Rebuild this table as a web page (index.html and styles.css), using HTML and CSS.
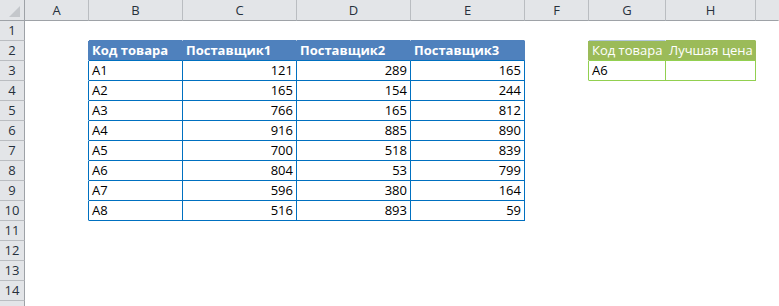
FILE: index.html
```html
<!DOCTYPE html>
<html lang="ru">
<head>
<meta charset="utf-8">
<title>Лист1</title>
<link rel="stylesheet" href="styles.css">
</head>
<body>
<div class="sheet">
  <div class="corner"><span class="tri"></span></div>
  <div class="hd">A</div><div class="hd">B</div><div class="hd">C</div><div class="hd">D</div><div class="hd">E</div><div class="hd">F</div><div class="hd">G</div><div class="hd">H</div><div class="hd last"></div>

  <div class="rh">1</div>
  <div class="c"></div><div class="c top-b"></div><div class="c top-b"></div><div class="c top-b"></div><div class="c top-b"></div><div class="c"></div><div class="c top-g1"></div><div class="c top-g"></div><div class="c"></div>

  <div class="rh">2</div>
  <div class="c left-bh"></div>
  <div class="c th">Код товара</div><div class="c th">Поставщик1</div><div class="c th">Поставщик2</div><div class="c th">Поставщик3</div>
  <div class="c left-gh"></div>
  <div class="c gh">Код товара</div><div class="c gh">Лучшая цена</div>
  <div class="c"></div>

  <div class="rh">3</div>
  <div class="c left-b"></div><div class="c td">A1</div><div class="c td n">121</div><div class="c td n">289</div><div class="c td n">165</div>
  <div class="c left-g"></div><div class="c gd">A6</div><div class="c gd"></div><div class="c"></div>

  <div class="rh">4</div>
  <div class="c left-b"></div><div class="c td">A2</div><div class="c td n">165</div><div class="c td n">154</div><div class="c td n">244</div>
  <div class="c"></div><div class="c"></div><div class="c"></div><div class="c"></div>

  <div class="rh">5</div>
  <div class="c left-b"></div><div class="c td">A3</div><div class="c td n">766</div><div class="c td n">165</div><div class="c td n">812</div>
  <div class="c"></div><div class="c"></div><div class="c"></div><div class="c"></div>

  <div class="rh">6</div>
  <div class="c left-b"></div><div class="c td">A4</div><div class="c td n">916</div><div class="c td n">885</div><div class="c td n">890</div>
  <div class="c"></div><div class="c"></div><div class="c"></div><div class="c"></div>

  <div class="rh">7</div>
  <div class="c left-b"></div><div class="c td">A5</div><div class="c td n">700</div><div class="c td n">518</div><div class="c td n">839</div>
  <div class="c"></div><div class="c"></div><div class="c"></div><div class="c"></div>

  <div class="rh">8</div>
  <div class="c left-b"></div><div class="c td">A6</div><div class="c td n">804</div><div class="c td n">53</div><div class="c td n">799</div>
  <div class="c"></div><div class="c"></div><div class="c"></div><div class="c"></div>

  <div class="rh">9</div>
  <div class="c left-b"></div><div class="c td">A7</div><div class="c td n">596</div><div class="c td n">380</div><div class="c td n">164</div>
  <div class="c"></div><div class="c"></div><div class="c"></div><div class="c"></div>

  <div class="rh">10</div>
  <div class="c left-b"></div><div class="c td">A8</div><div class="c td n">516</div><div class="c td n">893</div><div class="c td n">59</div>
  <div class="c"></div><div class="c"></div><div class="c"></div><div class="c"></div>

  <div class="rh">11</div>
  <div class="c"></div><div class="c"></div><div class="c"></div><div class="c"></div><div class="c"></div><div class="c"></div><div class="c"></div><div class="c"></div><div class="c"></div>
  <div class="rh">12</div>
  <div class="c"></div><div class="c"></div><div class="c"></div><div class="c"></div><div class="c"></div><div class="c"></div><div class="c"></div><div class="c"></div><div class="c"></div>
  <div class="rh">13</div>
  <div class="c"></div><div class="c"></div><div class="c"></div><div class="c"></div><div class="c"></div><div class="c"></div><div class="c"></div><div class="c"></div><div class="c"></div>
  <div class="rh">14</div>
  <div class="c"></div><div class="c"></div><div class="c"></div><div class="c"></div><div class="c"></div><div class="c"></div><div class="c"></div><div class="c"></div><div class="c"></div>
  <div class="rh"></div>
  <div class="c"></div><div class="c"></div><div class="c"></div><div class="c"></div><div class="c"></div><div class="c"></div><div class="c"></div><div class="c"></div><div class="c"></div>
</div>
</body>
</html>
```

FILE: styles.css
```css
html, body {
  margin: 0;
  padding: 0;
  background: #ffffff;
  overflow: hidden;
}

.sheet {
  display: grid;
  grid-template-columns: 25px 64px 94px 114px 114px 114px 64px 77px 90px 1fr;
  grid-template-rows: 21px repeat(15, 20px);
  font-family: "Open Sans", "Liberation Sans", sans-serif;
  font-size: 13px;
  color: #000000;
  width: 100%;
}

.sheet > div {
  box-sizing: border-box;
  border-right: 1px solid #ffffff;
  border-bottom: 1px solid #ffffff;
  display: flex;
  align-items: flex-end;
  padding: 0 3px 1px 3px;
  white-space: nowrap;
  overflow: visible;
  line-height: 17px;
}

.sheet > .corner {
  background: #e3e5e8;
  border-right: 1px solid #9ea2a7;
  border-bottom: 1px solid #9ea2a7;
  position: relative;
}

.tri {
  position: absolute;
  right: 4px;
  bottom: 3px;
  width: 0;
  height: 0;
  border-left: 11px solid transparent;
  border-bottom: 11px solid #c4c7cb;
}

.sheet > .hd {
  background: #e3e5e8;
  border-right: 1px solid #babdc1;
  border-bottom: 1px solid #9ea2a7;
  justify-content: center;
  align-items: center;
  color: #27313c;
  padding: 0;
}

.sheet > .hd.last {
  border-right-color: #e3e5e8;
}

.sheet > .rh {
  background: #e3e5e8;
  border-right: 1px solid #9ea2a7;
  border-bottom: 1px solid #babdc1;
  justify-content: center;
  align-items: center;
  color: #27313c;
  padding: 0;
}

.sheet > .top-b { border-bottom-color: #4f81bd; }
.sheet > .top-g1 { border-bottom-color: #b4c8dc; }
.sheet > .top-g { border-bottom-color: #9bbb59; }

.sheet > .left-bh { border-right-color: #4f81bd; }
.sheet > .left-b { border-right-color: #0070c0; }
.sheet > .left-gh { border-right-color: #9bbb59; }
.sheet > .left-g { border-right-color: #92d050; }

.sheet > .th {
  background: #4f81bd;
  color: #ffffff;
  font-weight: 700;
  border-right-color: #4f81bd;
  border-bottom-color: #0070c0;
}

.sheet > .td {
  border-right-color: #0070c0;
  border-bottom-color: #0070c0;
}

.sheet > .n {
  justify-content: flex-end;
}

.sheet > .gh {
  background: #9bbb59;
  color: #ffffff;
  border-right-color: #9bbb59;
  border-bottom-color: #92d050;
}

.sheet > .gd {
  border-right-color: #92d050;
  border-bottom-color: #92d050;
}
```
